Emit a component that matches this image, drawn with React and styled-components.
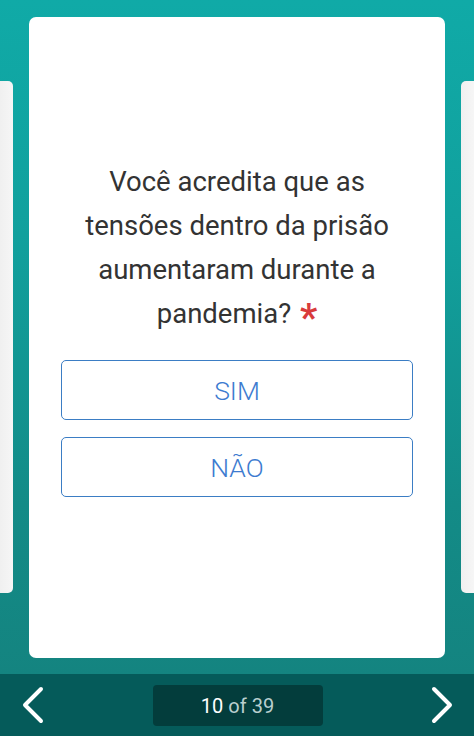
import React from "react";
import styled, { createGlobalStyle } from "styled-components";

const GlobalStyle = createGlobalStyle`
  html, body {
    margin: 0;
    padding: 0;
    background: #0c6f6d;
  }
  * {
    box-sizing: border-box;
  }
`;

const Page = styled.div`
  width: 474px;
  height: 736px;
  display: flex;
  flex-direction: column;
  font-family: Roboto, "Liberation Sans", sans-serif;
  overflow: hidden;
`;

const Stage = styled.div`
  flex: 1;
  display: grid;
  grid-template-columns: 13px 416px 13px;
  column-gap: 16px;
  padding: 17px 0 16px;
  background: linear-gradient(180deg, #10aaa7 0%, #11a09d 35%, #138b87 75%, #148480 100%);
`;

const SideCard = styled.div`
  margin-top: 64px;
  height: 512px;
  background: linear-gradient(90deg, #f0f0f0, #f6f6f6);
  border-radius: ${({ side }) => (side === "left" ? "0 5px 5px 0" : "5px 0 0 5px")};
`;

const Card = styled.div`
  background: #fff;
  border-radius: 7px;
  padding: 143px 32px 0;
  display: flex;
  flex-direction: column;
`;

const Question = styled.div`
  font-size: 27.5px;
  line-height: 44px;
  color: #333;
  text-align: center;
  padding: 0 8px;
`;

const Required = styled.span`
  color: #d93b3b;
  font-size: 38px;
  font-weight: 700;
  line-height: 20px;
  vertical-align: -8px;
  margin-left: 2px;
`;

const Options = styled.div`
  margin-top: 24px;
  display: flex;
  flex-direction: column;
  gap: 17px;
`;

const Option = styled.button`
  height: 60px;
  border: 1.5px solid #3b7dc4;
  border-radius: 5px;
  background: #fff;
  color: #3d7bd0;
  font-family: Roboto, "Liberation Sans", sans-serif;
  font-size: 26.5px;
  font-weight: 300;
  cursor: pointer;
`;

const Footer = styled.div`
  height: 62px;
  background: #055b5a;
  display: flex;
  align-items: center;
  justify-content: space-between;
  padding: 0 20px 0 21px;
`;

const NavButton = styled.button`
  width: 26px;
  height: 40px;
  padding: 0;
  border: none;
  background: none;
  display: flex;
  align-items: center;
  justify-content: center;
  cursor: pointer;
`;

const Counter = styled.div`
  width: 170px;
  height: 41px;
  margin-top: 1px;
  background: #033d3c;
  border-radius: 4px;
  display: flex;
  align-items: center;
  justify-content: center;
  font-size: 20px;
  color: #b9cfcf;
`;

const Current = styled.span`
  color: #fff;
  margin-right: 5px;
`;

const Chevron = ({ dir }) => (
  <svg width="24" height="38" viewBox="0 0 24 38" fill="none">
    <polyline
      points={dir === "left" ? "19,3 3,19 19,35" : "5,3 21,19 5,35"}
      stroke="#fff"
      strokeWidth="4"
      strokeLinecap="round"
      strokeLinejoin="round"
    />
  </svg>
);

export default function App() {
  return (
    <Page>
      <GlobalStyle />
      <Stage>
        <SideCard side="left" />
        <Card>
          <Question>
            Você acredita que as tensões dentro da prisão aumentaram durante a
            pandemia? <Required>*</Required>
          </Question>
          <Options>
            <Option>SIM</Option>
            <Option>NÃO</Option>
          </Options>
        </Card>
        <SideCard side="right" />
      </Stage>
      <Footer>
        <NavButton aria-label="Anterior">
          <Chevron dir="left" />
        </NavButton>
        <Counter>
          <Current>10</Current>of 39
        </Counter>
        <NavButton aria-label="Próximo">
          <Chevron dir="right" />
        </NavButton>
      </Footer>
    </Page>
  );
}
